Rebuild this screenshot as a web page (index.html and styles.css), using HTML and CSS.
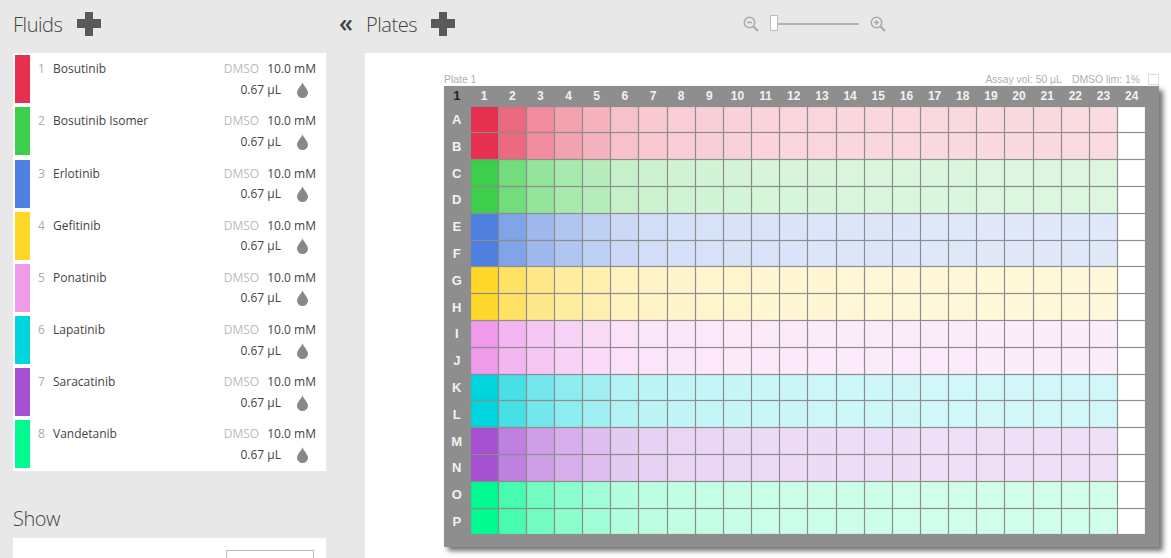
FILE: index.html
```html
<!DOCTYPE html>
<html lang="en">
<head>
    <meta charset="UTF-8">
    <title>Plate designer</title>
    <link rel="stylesheet" href="styles.css">
</head>
<body>

    <div class="topbar">
        <div class="fluids-head">
            <h2>Fluids</h2>
            <span class="plus"></span>
        </div>
        <span class="collapse">«</span>
        <h2>Plates</h2>
        <span class="plus"></span>
        <div class="zoom">
            <svg width="16" height="16" viewBox="0 0 16 16">
                <circle cx="6.5" cy="6.5" r="5.2" fill="none" stroke="#aaa" stroke-width="1.5"/>
                <path d="M4 6.5h5" stroke="#aaa" stroke-width="1.5"/>
                <path d="M10.5 10.5l4.5 4.5" stroke="#aaa" stroke-width="2.2"/>
            </svg>
            <div class="slider"><span class="handle"></span></div>
            <svg width="16" height="16" viewBox="0 0 16 16">
                <circle cx="6.5" cy="6.5" r="5.2" fill="none" stroke="#aaa" stroke-width="1.5"/>
                <path d="M4 6.5h5M6.5 4v5" stroke="#aaa" stroke-width="1.5"/>
                <path d="M10.5 10.5l4.5 4.5" stroke="#aaa" stroke-width="2.2"/>
            </svg>
        </div>
    </div>

    <div class="content">
        <div class="sidebar">
            <div class="fluid-list" id="fluidList"></div>
            <h2 class="show-title">Show</h2>
            <div class="show-panel">
                <div class="select-box"></div>
            </div>
        </div>

        <div class="plate-panel">
            <div class="plate-info">
                <span>Plate 1</span>
                <div class="plate-meta">
                    <span>Assay vol: 50 µL</span>
                    <span>DMSO lim: 1%</span>
                    <span class="check"></span>
                </div>
            </div>
            <div class="plate" id="plate"></div>
        </div>
    </div>

    <script src="script.js"></script>

</body>
</html>
```

FILE: styles.css
```css
* {
    box-sizing: border-box;
}

html, body {
    height: 100%;
}

body {
    margin: 0;
    background: #e8e8e8;
    color: #444;
    font-family: 'Open Sans', 'Noto Sans', sans-serif;
    font-size: 12px;
    overflow: hidden;
}

h2 {
    margin: 0;
    font-size: 20px;
    font-weight: 300;
    letter-spacing: -0.45px;
    color: #444;
}

/* Top bar */
.topbar {
    display: flex;
    align-items: center;
    height: 53px;
    padding-bottom: 5px;
}

.fluids-head {
    display: flex;
    align-items: center;
    width: 340px;
    padding-left: 13px;
}

.fluids-head h2 {
    width: 64px;
}

.collapse {
    width: 26px;
    font-size: 25px;
    font-weight: 600;
    line-height: 24px;
    color: #444;
    margin-top: -5px;
    margin-left: -1px;
    margin-right: 1px;
}

.topbar > h2 {
    width: 65px;
}

.plus {
    position: relative;
    display: block;
    width: 24px;
    height: 24px;
}

.plus::before, .plus::after {
    content: "";
    position: absolute;
    background: #595959;
}

.plus::before {
    left: 8px;
    top: 0;
    width: 8px;
    height: 24px;
}

.plus::after {
    left: 0;
    top: 7px;
    width: 24px;
    height: 9px;
}

.zoom {
    display: flex;
    align-items: center;
    margin-left: 288px;
}

.slider {
    position: relative;
    width: 89px;
    height: 2px;
    margin: 0 11px;
    background: #b4b4b4;
}

.handle {
    position: absolute;
    left: 0;
    top: -8px;
    width: 8px;
    height: 16px;
    background: #fff;
    border: 1px solid #bbb;
}

/* Fluids */
.content {
    display: flex;
    height: 505px;
}

.sidebar {
    width: 365px;
    padding-left: 13px;
}

.fluid-list {
    width: 313px;
    height: 418px;
    padding-top: 0.13px;
    background: #fff;
}

.fluid {
    display: flex;
    height: 52.19px;
    padding: 2px 10px 2px 2px;
}

.swatch {
    width: 15px;
    height: 48px;
    margin-right: 8px;
}

.num {
    width: 15px;
    padding-top: 5px;
    color: #aaa;
}

.name {
    flex: 1;
    padding-top: 5px;
}

.details {
    width: 95px;
    padding-top: 5px;
    text-align: right;
}

.solvent {
    color: #bbb;
    margin-right: 5px;
}

.amount {
    display: flex;
    justify-content: flex-end;
    align-items: center;
    margin-top: 3px;
    height: 18px;
}

.amount svg {
    margin: 1px 8px 0 16px;
}

.show-title {
    margin-top: 34px;
    height: 33px;
}

.show-panel {
    width: 313px;
    height: 40px;
    padding: 12px 12px 0 0;
    background: #fff;
}

.select-box {
    width: 88px;
    height: 30px;
    margin-left: auto;
    border: 1px solid #bbb;
}

/* Plate */
.plate-panel {
    flex: 1;
    padding-left: 79px;
    background: #fff;
}

.plate-info {
    display: flex;
    justify-content: space-between;
    align-items: flex-end;
    width: 715px;
    height: 33px;
    padding-bottom: 1px;
    font-family: 'Liberation Sans', Arial, sans-serif;
    font-size: 10.4px;
    color: #b0b0b0;
}

.plate-meta {
    display: flex;
    align-items: center;
    gap: 10px;
}

.check {
    width: 11px;
    height: 11px;
    margin-left: -2px;
    border: 1px solid #ddd;
}

.plate {
    display: grid;
    grid-template-columns: 25.5px repeat(24, 27.17px);
    grid-template-rows: 19.7px repeat(16, 25.8px);
    gap: 1px;
    width: 715px;
    height: 461px;
    background: #8e8e8e;
    box-shadow: 4px 4px 5px rgba(0, 0, 0, 0.55);
    font-family: 'Liberation Sans', Arial, sans-serif;
    font-size: 12px;
    font-weight: bold;
    color: #f2f2f2;
}

.plate-label {
    display: flex;
    justify-content: center;
    align-items: center;
}

.plate-label.row-label {
    font-size: 13px;
}

.plate-label.corner {
    color: #222;
    font-size: 13px;
}

.well {
    box-shadow: inset 0 0 1px rgba(110, 110, 110, 0.7);
}
```

FILE: script.js
```js
// Fluids and their colours, each one fills two plate rows
const fluids = [
    { name: "Bosutinib", color: [229, 48, 79] },
    { name: "Bosutinib Isomer", color: [61, 206, 75] },
    { name: "Erlotinib", color: [80, 128, 224] },
    { name: "Gefitinib", color: [255, 214, 42] },
    { name: "Ponatinib", color: [240, 154, 234] },
    { name: "Lapatinib", color: [0, 212, 220] },
    { name: "Saracatinib", color: [166, 80, 210] },
    { name: "Vandetanib", color: [0, 250, 144] }
];

// How strong the colour is per column, 24 is the empty control column
const strength = [1, .72, .55, .45, .37, .3, .26, .24, .23, .22, .21, .205,
                  .2, .195, .195, .19, .185, .185, .18, .18, .18, .175, .175, 0];

const drop = `<svg width="11" height="16" viewBox="0 0 11 16">
    <path d="M5.5 0C5.8 3 11 7 11 10.8A5.5 5.2 0 0 1 0 10.8C0 7 5.2 3 5.5 0Z" fill="#888"/>
</svg>`;

function mix(color, amount) {
    let parts = color.map(c => Math.round(255 - (255 - c) * amount));
    return `rgb(${parts.join(",")})`;
}

let list = document.getElementById("fluidList");
fluids.forEach((fluid, i) => {
    let row = document.createElement("div");
    row.className = "fluid";
    row.innerHTML = `<div class="swatch" style="background:${mix(fluid.color, 1)}"></div>
        <div class="num">${i + 1}</div>
        <div class="name">${fluid.name}</div>
        <div class="details">
            <div><span class="solvent">DMSO</span> 10.0 mM</div>
            <div class="amount">0.67 µL ${drop}</div>
        </div>`;
    list.appendChild(row);
});

let plate = document.getElementById("plate");

function addLabel(text, extra) {
    let label = document.createElement("div");
    label.className = "plate-label " + extra;
    label.textContent = text;
    plate.appendChild(label);
}

addLabel("1", "corner");
for (let col = 1; col <= 24; col++) {
    addLabel(col, "");
}

for (let r = 0; r < 16; r++) {
    addLabel("ABCDEFGHIJKLMNOP"[r], "row-label");
    let color = fluids[Math.floor(r / 2)].color;
    for (let col = 0; col < 24; col++) {
        let cell = document.createElement("div");
        cell.className = "well";
        cell.style.background = mix(color, strength[col]);
        plate.appendChild(cell);
    }
}
```
